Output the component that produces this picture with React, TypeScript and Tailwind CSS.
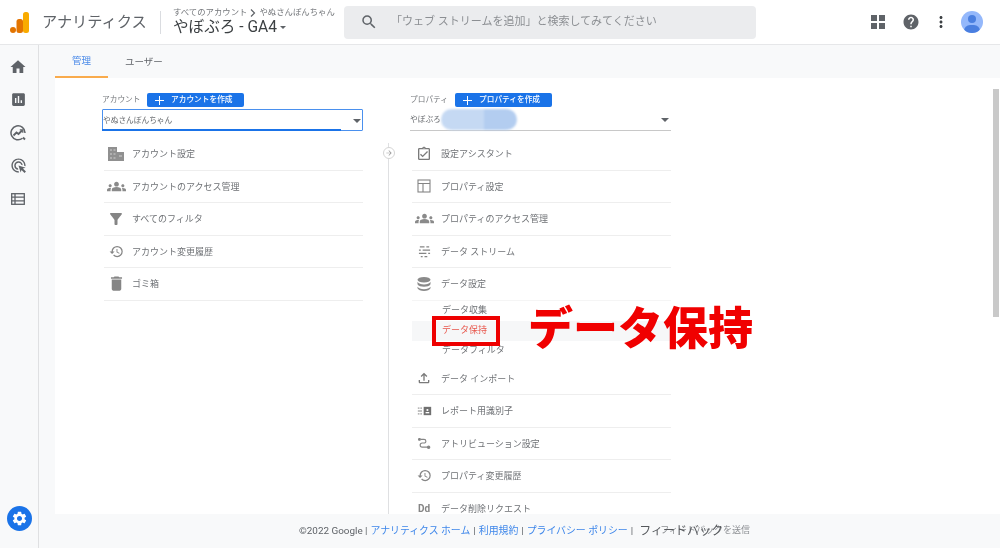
import type { ReactNode } from 'react';
import {
  MdArrowForward,
  MdAssessment,
  MdDelete,
  MdFilterAlt,
  MdGroups,
  MdHelp,
  MdHistory,
  MdHome,
  MdMoreVert,
  MdOutlineAdsClick,
  MdOutlineAssignmentTurnedIn,
  MdOutlineFileUpload,
  MdSearch,
  MdSettings,
} from 'react-icons/md';

function Logo() {
  return (
    <svg width="19" height="21" viewBox="0 0 19 21">
      <rect x="13" y="0" width="6" height="21" rx="2.500" fill="#f9ab00" />
      <rect x="6.500" y="7" width="6.500" height="14" rx="2.500" fill="#e37400" />
      <circle cx="3" cy="18" r="3" fill="#e37400" />
    </svg>
  );
}

function AppsIcon() {
  return (
    <svg width="14" height="14" viewBox="0 0 14 14" fill="#5f6368">
      <rect x="0" y="0" width="6" height="6" />
      <rect x="8" y="0" width="6" height="6" />
      <rect x="0" y="8" width="6" height="6" />
      <rect x="8" y="8" width="6" height="6" />
    </svg>
  );
}

function BuildingIcon() {
  return (
    <svg width="16" height="14" viewBox="0 0 16 14" fill="#909090">
      <path d="M0 0h9v14H0z" />
      <path d="M9 5h7v9H9z" />
      <path d="M2 2h2v2H2zM5.500 2h2v2h-2zM2 6h2v2H2zM5.500 6h2v2h-2zM2 10h2v2H2zM5.500 10h2v2h-2zM11 8h3v2h-3z" fill="#b0b0b0" />
    </svg>
  );
}

function TableIcon() {
  return (
    <svg width="14" height="14" viewBox="0 0 14 14" fill="none" stroke="#858585" strokeWidth="1.100">
      <rect x="1" y="1" width="12" height="12" />
      <path d="M1 4.500h12M6 4.500V13" />
    </svg>
  );
}

function StreamIcon() {
  return (
    <svg width="13" height="13" viewBox="0 0 14 14" stroke="#858585" strokeWidth="1.300">
      <path d="M2 2h5M9 2h3M1 5.500h2M5 5.500h8M1 9h8M11 9h2M3 12.500h2M7 12.500h3" />
    </svg>
  );
}

function DatabaseIcon() {
  return (
    <svg width="14" height="14" viewBox="0 0 14 14" fill="#8a8a8a">
      <ellipse cx="7" cy="2.800" rx="6.500" ry="2.800" />
      <path d="M.5 4.800c1 1.800 3.500 2.600 6.500 2.600s5.500-.8 6.500-2.600v2.400c-1 1.800-3.500 2.500-6.500 2.500S1.500 9 .5 7.200z" />
      <path d="M.5 9.800c1 1.600 3.500 2.400 6.500 2.400s5.500-.8 6.500-2.400v1.400C13 12.800 10 14 7 14S1 12.800.5 11.200z" />
    </svg>
  );
}

function IdentifierIcon() {
  return (
    <svg width="15" height="10" viewBox="0 0 16 12">
      <path d="M0 2.500h2M3 2.500h2M0 6h5M0 9.500h2M3 9.500h2" stroke="#858585" strokeWidth="1.200" />
      <rect x="7" y="1" width="9" height="10" fill="#707070" />
      <circle cx="11.500" cy="4.800" r="1.300" fill="#fff" />
      <rect x="9.300" y="7.200" width="4.400" height="1.600" fill="#fff" />
    </svg>
  );
}

function AttributionIcon() {
  return (
    <svg width="13" height="11" viewBox="0 0 14 12" fill="none" stroke="#858585" strokeWidth="1.200">
      <circle cx="1.500" cy="1.500" r="1" fill="#858585" />
      <path d="M3 1.500h3.500a2 2 0 0 1 0 4H4.500a2.200 2.200 0 0 0 0 4.500H10" />
      <circle cx="11.500" cy="10" r="1.300" fill="#858585" />
    </svg>
  );
}

function InsightsIcon() {
  return (
    <svg width="16" height="16" viewBox="0 0 16 16" fill="none" stroke="#5f6368" strokeWidth="1.500">
      <path d="M12.500 13.200A7 7 0 1 1 15 8" />
      <path d="M3.500 10.500 6.500 7.500l2 1.500L12 5.500" strokeWidth="1.800" />
      <path d="M9.800 4.800h3v3" strokeWidth="1.300" />
      <path d="M13 12.500l2 2" strokeWidth="1.800" />
    </svg>
  );
}

function ListTableIcon() {
  return (
    <svg width="14" height="12" viewBox="0 0 14 12" fill="none" stroke="#5f6368" strokeWidth="1.300">
      <rect x=".7" y=".7" width="12.600" height="10.600" />
      <path d="M.7 4.200h12.600M.7 7.800h12.600M4 .7v10.600" />
    </svg>
  );
}

function SideIcon({ children }: { children: ReactNode }) {
  return <div className="flex h-[33px] items-center justify-center text-[#5f6368]">{children}</div>;
}

function Row({ icon, label, iconBox = 'w-[28px] pr-[4px]' }: { icon: ReactNode; label: string; iconBox?: string }) {
  return (
    <div className="flex h-[32.5px] items-center border-b border-[#eeeeee]">
      <div className={`flex shrink-0 items-center justify-center ${iconBox}`}>{icon}</div>
      <span className="pt-[2px] text-[9px] text-[#6f7276]">{label}</span>
    </div>
  );
}

function ColumnHead({ label, button }: { label: string; button: string }) {
  return (
    <div className="flex h-[14px] items-center">
      <span className="w-[45px] text-[7.7px] text-[#74777b]">{label}</span>
      <button className="flex h-[14px] w-[97px] items-center rounded-[2px] bg-[#1a73e8] pl-[8px] text-[7.7px] font-medium text-white">
        <svg width="9" height="9" viewBox="0 0 9 9" stroke="#fff" strokeWidth="1" className="mr-[7px]">
          <path d="M4.500 0v9M0 4.500h9" />
        </svg>
        {button}
      </button>
    </div>
  );
}

const accountRows = [
  { icon: <BuildingIcon />, label: 'アカウント設定' },
  { icon: <MdGroups size={19} color="#8a8a8a" />, label: 'アカウントのアクセス管理' },
  { icon: <MdFilterAlt size={18} color="#858585" />, label: 'すべてのフィルタ' },
  { icon: <MdHistory size={15} color="#858585" />, label: 'アカウント変更履歴' },
  { icon: <MdDelete size={19} color="#858585" />, label: 'ゴミ箱' },
];

const propertyBox = 'w-[29px] pr-[5px]';

const propertyTop = [
  { icon: <MdOutlineAssignmentTurnedIn size={16} color="#7a7a7a" />, label: '設定アシスタント' },
  { icon: <TableIcon />, label: 'プロパティ設定' },
  { icon: <MdGroups size={19} color="#8a8a8a" />, label: 'プロパティのアクセス管理' },
  { icon: <StreamIcon />, label: 'データ ストリーム' },
];

const propertyBottom = [
  { icon: <MdOutlineFileUpload size={16} color="#7a7a7a" />, label: 'データ インポート' },
  { icon: <IdentifierIcon />, label: 'レポート用識別子' },
  { icon: <AttributionIcon />, label: 'アトリビューション設定' },
  { icon: <MdHistory size={15} color="#858585" />, label: 'プロパティ変更履歴' },
  { icon: <span className="text-[10px] font-bold text-[#858585]">Dd</span>, label: 'データ削除リクエスト' },
];

export default function App() {
  return (
    <div className="relative flex h-[548px] w-[1000px] flex-col overflow-hidden bg-[#f8f9fa] font-[Roboto,'Noto_Sans_CJK_JP',sans-serif] blur-[0.4px]">
      {/* Header */}
      <header className="flex h-[45px] shrink-0 items-center border-b border-[#e6e7e9] bg-white pl-[10px]">
        <div className="mt-[1px] w-[20px]"><Logo /></div>
        <span className="ml-[12px] w-[106px] whitespace-nowrap text-[15.2px] text-[#5f6368]">アナリティクス</span>
        <div className="ml-[12px] h-[23px] w-px bg-[#dadce0]" />
        <div className="ml-[12px] w-[171px]">
          <div className="flex h-[11px] items-center whitespace-nowrap text-[8.4px] leading-none text-[#74777b]">
            すべてのアカウント
            <svg width="6" height="8" viewBox="0 0 6 8" fill="none" stroke="#5f6368" strokeWidth="1.200" className="mx-[3px]">
              <path d="M1 .5 4.500 4 1 7.500" />
            </svg>
            やぬさんぽんちゃん
          </div>
          <div className="flex h-[19px] items-center whitespace-nowrap text-[15.6px] leading-none text-[#3c4043]">
            やぼぶろ - GA4
            <span className="ml-[3px] h-0 w-0 border-x-[3.5px] border-t-[3.5px] border-x-transparent border-t-[#5f6368]" />
          </div>
        </div>
        <div className="flex h-[33px] w-[412px] items-center rounded-[4px] bg-[#ebecee]">
          <MdSearch size={18} color="#5f6368" className="ml-[16px]" />
          <span className="ml-[13px] text-[11px] text-[#8c8f93]">「ウェブ ストリームを追加」と検索してみてください</span>
        </div>
        <div className="flex flex-1 items-center justify-end pr-[17px]">
          <AppsIcon />
          <MdHelp size={18} color="#5f6368" className="ml-[17px]" />
          <MdMoreVert size={18} color="#3c4043" className="ml-[12px]" />
          <div className="relative ml-[11px] h-[22px] w-[22px] overflow-hidden rounded-full bg-[#94b8fb]">
            <div className="mx-auto mt-[4px] h-[8px] w-[8px] rounded-full bg-[#4a7fe0]" />
            <div className="mx-auto mt-[1.5px] h-[12px] w-[16px] rounded-full bg-[#4a7fe0]" />
          </div>
        </div>
      </header>

      <div className="flex min-h-0 flex-1">
        {/* Sidebar */}
        <aside className="flex w-[39px] shrink-0 flex-col border-r border-[#dfe0e2] pr-[2px]">
          <div className="pt-[5px]">
            <SideIcon><MdHome size={18} /></SideIcon>
            <SideIcon><MdAssessment size={17} /></SideIcon>
            <SideIcon><InsightsIcon /></SideIcon>
            <SideIcon><MdOutlineAdsClick size={17} /></SideIcon>
            <SideIcon><ListTableIcon /></SideIcon>
          </div>
          <div className="mb-[17px] ml-[7px] mt-auto flex h-[25px] w-[25px] items-center justify-center rounded-full bg-[#1a73e8]">
            <MdSettings size={17} color="#fff" />
          </div>
        </aside>

        <div className="flex min-w-0 flex-1 flex-col">
          {/* Tabs */}
          <div className="flex h-[33px] shrink-0 pl-[16px]">
            <div className="flex w-[53px] items-center justify-center border-b-2 border-[#f9ab4c] pt-[2px] text-[9.5px] text-[#4a8ae8]">管理</div>
            <div className="ml-[17px] flex items-center pt-[2px] text-[9.5px] text-[#5f6368]">ユーザー</div>
          </div>

          {/* Admin panel */}
          <main className="ml-[16px] flex min-h-0 flex-1 overflow-hidden bg-white pl-[47px] pt-[15px]">
            <section className="w-[261px] shrink-0">
              <ColumnHead label="アカウント" button="アカウントを作成" />
              <div className="relative mt-[2px] flex h-[22px] items-center justify-between rounded-[1px] border border-[#4a90ee] pr-[1px] pt-[1px] text-[7.7px] text-[#66696d]">
                やぬさんぽんちゃん
                <span className="h-0 w-0 border-x-[4px] border-t-[4px] border-x-transparent border-t-[#5f6368]" />
                <div className="absolute bottom-[-1px] left-[-1px] h-[2px] w-[239px] bg-[#1a73e8]" />
              </div>
              <div className="ml-[2px] mt-[7px]">
                {accountRows.map((r) => (
                  <Row key={r.label} icon={r.icon} label={r.label} />
                ))}
              </div>
            </section>

            <div className="relative w-[47px] shrink-0 pt-[50px]">
              <div className="ml-[25px] h-full w-px bg-[#dfe0e2]" />
              <div className="absolute left-[19.5px] top-[54px] flex h-[12px] w-[12px] items-center justify-center rounded-full border border-[#d5d5d5] bg-white">
                <MdArrowForward size={8} color="#9a9a9a" />
              </div>
            </div>

            <section className="w-[261px] shrink-0">
              <ColumnHead label="プロパティ" button="プロパティを作成" />
              <div className="mt-[2px] flex h-[22px] items-center justify-between border-b border-[#c8c8c8] pr-[2px] text-[7.7px] text-[#66696d]">
                <div className="flex h-full items-center">
                  <span className="pt-[1px]">やぼぶろ</span>
                  <div className="flex h-full w-[76px] overflow-hidden rounded-full blur-[1px]">
                    <div className="w-[43px] bg-[#c5d9f3]" />
                    <div className="flex-1 bg-[#b3cdf0]" />
                  </div>
                </div>
                <span className="h-0 w-0 border-x-[4px] border-t-[4px] border-x-transparent border-t-[#5f6368]" />
              </div>
              <div className="ml-[2px] mt-[7px]">
                {propertyTop.map((r) => (
                  <Row key={r.label} icon={r.icon} label={r.label} iconBox={propertyBox} />
                ))}
                <div className="flex h-[32.5px] items-center border-b border-[#f5f5f5]">
                  <div className={`flex shrink-0 items-center justify-center ${propertyBox}`}>
                    <DatabaseIcon />
                  </div>
                  <span className="pt-[2px] text-[9px] text-[#6f7276]">データ設定</span>
                </div>
                <div className="h-[62px] text-[9px]">
                  <div className="flex h-[20px] items-center pl-[30px] text-[#6f7276]">データ収集</div>
                  <div className="flex h-[20px] items-center bg-[#f6f7f8] pl-[30px] text-[#e8574c]">データ保持</div>
                  <div className="flex h-[20px] items-center pl-[30px] text-[#6f7276]">データフィルタ</div>
                </div>
                {propertyBottom.map((r) => (
                  <Row key={r.label} icon={r.icon} label={r.label} iconBox={propertyBox} />
                ))}
              </div>
            </section>
          </main>

          {/* Footer */}
          <footer className="flex h-[34px] shrink-0 items-center justify-center pl-[10px] text-[9.9px] text-[#5f6368]">
            <span>©2022 Google | </span>
            <span className="ml-[3px] text-[#3d86ea]">アナリティクス ホーム</span>
            <span className="mx-[3px]">|</span>
            <span className="text-[#3d86ea]">利用規約</span>
            <span className="mx-[3px]">|</span>
            <span className="text-[#3d86ea]">プライバシー ポリシー</span>
            <span className="ml-[3px]">|</span>
            <span className="relative ml-[27px] text-[9px] text-[#8c8f93]">
              フィードバックを送信
              <span className="absolute left-[-21px] top-[-2px] whitespace-nowrap text-[12px] text-[#55585c]">フィードバック</span>
            </span>
          </footer>
        </div>
      </div>

      {/* Scrollbar */}
      <div className="absolute left-[993px] top-[89px] h-[228px] w-[6px] bg-[#c9c9c9]" />

      {/* Annotation */}
      <div className="absolute left-[432px] top-[316px] h-[30px] w-[68px] border-4 border-[#ee0000]" />
      <div className="absolute left-[528px] top-[297px] whitespace-nowrap text-[45px] font-black leading-[65px] text-[#f00000]">データ保持</div>
    </div>
  );
}
